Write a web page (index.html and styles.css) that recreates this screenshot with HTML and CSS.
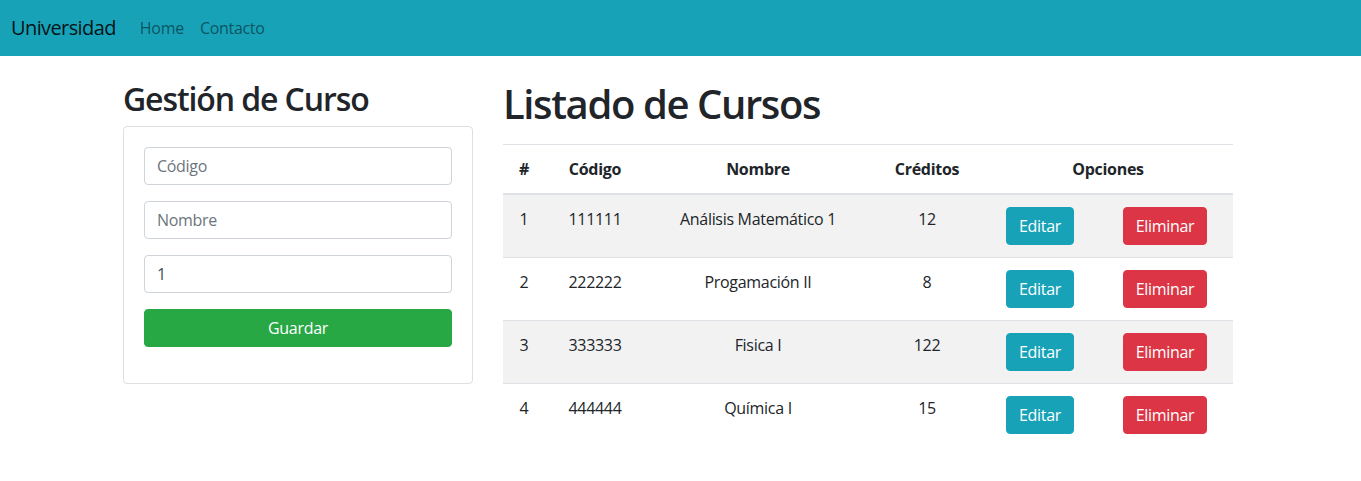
FILE: index.html
```html
<!DOCTYPE html>
<html lang="es">
<head>
<meta charset="utf-8">
<title>Universidad</title>
<link rel="stylesheet" href="styles.css">
</head>
<body>
<nav class="navbar">
  <a class="brand" href="#">Universidad</a>
  <ul class="nav-links">
    <li><a href="#">Home</a></li>
    <li><a href="#">Contacto</a></li>
  </ul>
</nav>
<main class="container">
  <section class="col-form">
    <h2 class="title-sm">Gestión de Curso</h2>
    <div class="card">
      <form class="card-body">
        <div class="form-group"><input class="form-control" type="text" placeholder="Código"></div>
        <div class="form-group"><input class="form-control" type="text" placeholder="Nombre"></div>
        <div class="form-group"><input class="form-control" type="text" value="1"></div>
        <div class="form-group"><button type="button" class="btn btn-success btn-block">Guardar</button></div>
      </form>
    </div>
  </section>
  <section class="col-list">
    <h1 class="title-lg">Listado de Cursos</h1>
    <table class="table">
      <colgroup>
        <col class="c-num"><col class="c-cod"><col class="c-nom"><col class="c-cred"><col class="c-ed"><col class="c-del">
      </colgroup>
      <thead>
        <tr><th>#</th><th>Código</th><th>Nombre</th><th>Créditos</th><th colspan="2">Opciones</th></tr>
      </thead>
      <tbody>
        <tr class="odd"><td>1</td><td>111111</td><td>Análisis Matemático 1</td><td>12</td><td><button class="btn btn-info">Editar</button></td><td><button class="btn btn-danger">Eliminar</button></td></tr>
        <tr><td>2</td><td>222222</td><td>Progamación II</td><td>8</td><td><button class="btn btn-info">Editar</button></td><td><button class="btn btn-danger">Eliminar</button></td></tr>
        <tr class="odd"><td>3</td><td>333333</td><td>Fisica I</td><td>122</td><td><button class="btn btn-info">Editar</button></td><td><button class="btn btn-danger">Eliminar</button></td></tr>
        <tr><td>4</td><td>444444</td><td>Química I</td><td>15</td><td><button class="btn btn-info">Editar</button></td><td><button class="btn btn-danger">Eliminar</button></td></tr>
      </tbody>
    </table>
  </section>
</main>
</body>
</html>
```
FILE: styles.css
```css
* { box-sizing: border-box; }
body {
  margin: 0;
  font-family: "Segoe UI", "Open Sans", sans-serif;
  font-size: 16px;
  line-height: 1.5;
  letter-spacing: -0.3px;
  color: #212529;
  background: #fff;
}
.navbar {
  display: flex;
  align-items: center;
  height: 56px;
  padding: 8px 11px;
  background: #17a2b8;
}
.brand {
  font-size: 20px;
  line-height: 30px;
  padding: 5px 0;
  margin-right: 16px;
  letter-spacing: -0.6px;
  color: rgba(0,0,0,.9);
  text-decoration: none;
}
.nav-links {
  display: flex;
  list-style: none;
  margin: 0;
  padding: 0;
}
.nav-links a {
  display: block;
  padding: 8px;
  color: rgba(0,0,0,.5);
  text-decoration: none;
}
.container {
  display: flex;
  gap: 30px;
  width: 1110px;
  margin: 24px 0 0 123px;
}
.col-form { width: 350px; flex: none; }
.col-list { width: 730px; flex: none; }
.title-sm {
  font-size: 32px;
  font-weight: 600;
  line-height: 1.2;
  letter-spacing: -1.1px;
  margin: 0 0 8px;
}
.title-lg {
  font-size: 40px;
  font-weight: 600;
  line-height: 1.2;
  letter-spacing: -1.4px;
  margin: 0 0 16px;
}
.card {
  border: 1px solid rgba(0,0,0,.125);
  border-radius: 4px;
}
.card-body { padding: 20px; margin: 0; }
.form-group { margin-bottom: 16px; }
.form-control {
  display: block;
  width: 100%;
  height: 38px;
  padding: 6px 12px;
  font: inherit;
  letter-spacing: inherit;
  color: #495057;
  border: 1px solid #ced4da;
  border-radius: 4px;
  background: #fff;
}
.form-control::placeholder { color: #6c757d; }
.btn {
  display: inline-block;
  font: inherit;
  letter-spacing: inherit;
  line-height: 24px;
  padding: 6px 12px;
  border: 1px solid transparent;
  border-radius: 4px;
  color: #fff;
  cursor: pointer;
}
.btn-block { display: block; width: 100%; }
.btn-success { background: #28a745; border-color: #28a745; }
.btn-info { background: #17a2b8; border-color: #17a2b8; }
.btn-danger { background: #dc3545; border-color: #dc3545; }
.table {
  width: 730px;
  table-layout: fixed;
  border-collapse: collapse;
  text-align: center;
}
.c-num { width: 42px; }
.c-cod { width: 100px; }
.c-nom { width: 226px; }
.c-cred { width: 112px; }
.c-ed { width: 114px; }
.c-del { width: 136px; }
.table th, .table td {
  padding: 12px;
  vertical-align: top;
  border-top: 1px solid #dee2e6;
}
.table th { font-weight: 700; }
.table thead th { border-bottom: 2px solid #dee2e6; }
.table tr.odd { background: rgba(0,0,0,.05); }
```
